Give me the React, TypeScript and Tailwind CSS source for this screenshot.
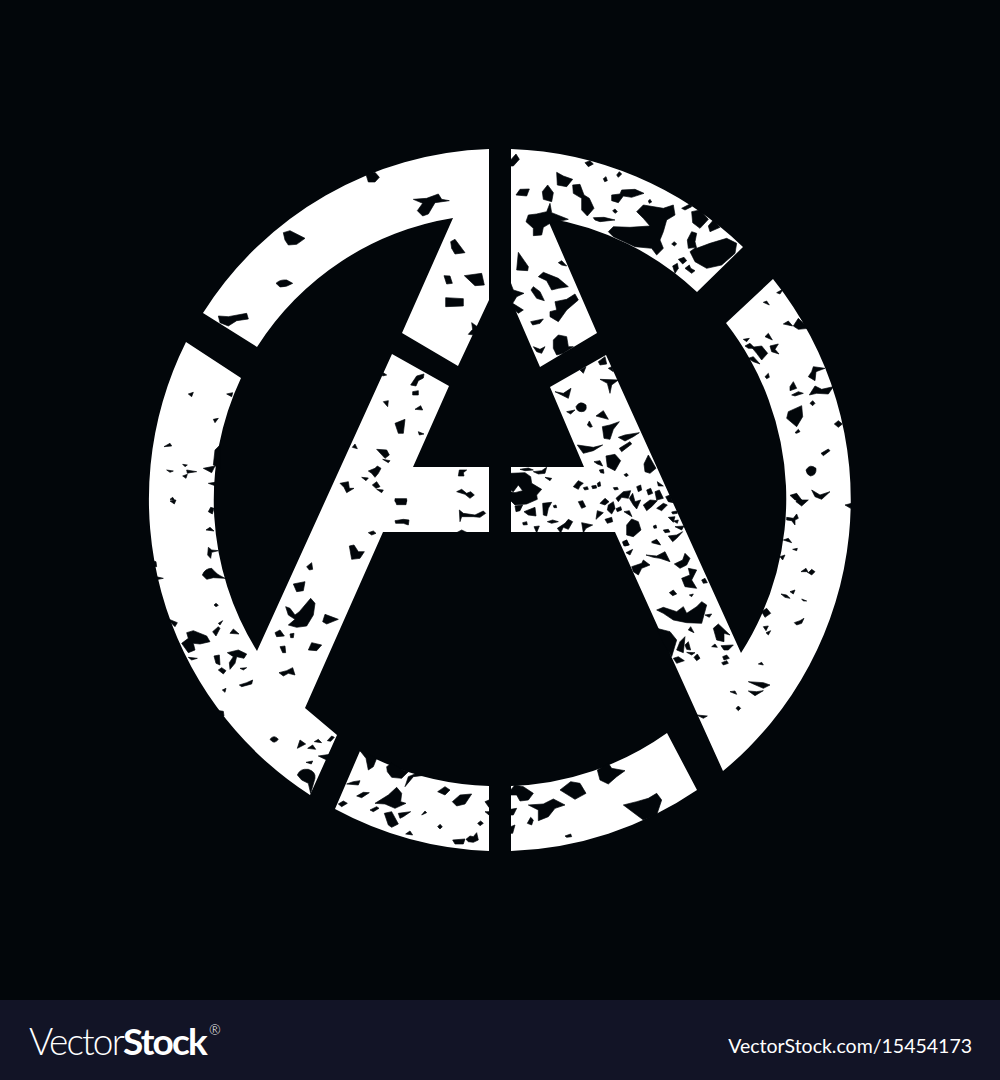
/* Distress marks are traced in 3x crop coordinates, one list per crop */
const INK = "#02060a";

const ringAndLetter = [
  "M489 149A352 352 0 0 0 203 313L257 347A286 286 0 0 1 453 218L402 333L458 366L489 300Z",
  "M186 342L241 378A286 286 0 0 0 257 651L392 354L449 386L413 467H489V532H383L305 708L337 735L310 795A352 352 0 0 1 186 342Z",
  "M360 751L335 809A352 352 0 0 0 489 851V786A286 286 0 0 1 360 751Z",
  "M511 851A352 352 0 0 0 697 790L667 733A286 286 0 0 1 511 786Z",
  "M723 771A352 352 0 0 0 773 279L726 323A286 286 0 0 1 741 653L606 355L550 387L584 467H511V532H615Z",
  "M511 149A352 352 0 0 1 743 247L697 292A286 286 0 0 0 547 218L597 333L540 367L511 300Z",
];

const topLeft = [
  "M678 103L705 97L718 112L705 126L685 126Z",
  "M820 178L860 175L895 162L905 178L928 182L885 188L865 222L848 228L832 212L848 190Z",
  "M430 278L450 272L495 295L470 313L445 315L435 300Z",
  "M408 430Q420 418 440 420L458 430Q440 442 420 441Z",
  "M235 528L265 530L320 520L325 537L290 542L265 558L240 548Z",
  "M932 305L945 298L975 338L945 342L935 325Z",
  "M912 407L930 408L937 430L920 432Z",
  "M973 407L1025 400L1033 435L1005 437Z",
  "M917 473L970 476L970 498L917 500Z",
  "M995 548L1012 560L1003 585L985 583L998 568Z",
  "M812 735L830 708L852 702L850 714L835 722L828 738Z",
  "M818 755L835 752L835 765L818 765Z",
  "M825 808L842 797L848 810Z",
  "M765 850L795 838L790 880L775 880Z",
  "M835 875L852 882L838 885Z",
  "M730 785L745 782L743 800Z",
  "M725 695L740 705L728 708Z",
  "M710 928L740 930L748 945L735 955Z",
  "M728 958L750 962L745 968Z",
  "M685 993L705 985L712 978L723 985L715 1000L705 1012L695 1000Z",
  "M665 1012L685 1014L678 1022Z",
  "M697 1035L710 1025L720 1040L708 1045Z",
  "M710 1048L730 1050L725 1058Z",
  "M600 1030L625 1025L628 1045L642 1045L620 1058L612 1042Z",
  "M637 922L645 912L652 926Z",
  "M958 990L980 990L970 998L972 1008L955 1008Z",
  "M950 1055L965 1048L980 1060L992 1055L1003 1065L990 1075L975 1063Z",
  "M765 1076L800 1076L800 1085L765 1085Z",
  "M145 762L160 757L155 770Z",
  "M260 762L278 758L275 770Z",
  "M220 838L235 835L225 848Z",
  "M72 920L90 910L95 918Z",
  "M80 990L100 993L90 997Z",
  "M128 973L142 975L135 980Z",
  "M140 990L170 995L150 998L142 1000Z",
  "M128 1008L142 1003L138 1015Z",
  "M190 985L225 978L215 998Z",
  "M205 1030L225 1027L225 1037Z",
  "M225 930L240 915L240 985L220 975Z",
  "M90 1078L98 1072L105 1082Z",
];

const bottomLeft = [
  "M90 3L108 0L103 12Z",
  "M205 35L212 22L222 25L217 42Z",
  "M198 90L210 82L222 93Z",
  "M205 142L215 150L235 152L215 157L212 175L203 165Z",
  "M187 225Q195 205 215 205Q230 225 255 235L220 233L200 238Z",
  "M30 180L48 185L50 200L35 198Z",
  "M40 228L70 235L45 240Z",
  "M222 315L228 310L235 316L228 320Z",
  "M80 355L112 368L105 380Z",
  "M125 430L145 415L140 398L160 392L200 408L210 425L180 432L160 430L165 450L145 458Z",
  "M145 472L172 475L155 480Z",
  "M218 395L235 380L240 385L228 408Z",
  "M235 370L248 362L240 375Z",
  "M270 400L280 387L297 402Z",
  "M262 458L295 450L320 462L312 475L290 470L285 490L270 508L268 488L280 470Z",
  "M222 468L238 465L240 495L228 490Z",
  "M235 510L245 503L258 512L250 522Z",
  "M300 505L320 503L310 510Z",
  "M298 555L320 548L338 540L335 552L305 560Z",
  "M247 570L258 565L255 577Z",
  "M500 200L515 188L518 208L508 210Z",
  "M460 252L495 245L490 272L470 275Z",
  "M478 335L512 295L525 310L520 345L500 378L470 382L445 375L465 358L445 345L437 320L450 325L465 345Z",
  "M555 343L595 358L560 372L548 365Z",
  "M405 398L420 390L433 408L410 410Z",
  "M450 402L462 400L460 413L452 413Z",
  "M420 440L435 438L437 458L428 458Z",
  "M505 450L515 428L545 435L530 452Z",
  "M417 518L440 512L458 503L465 525L445 520L430 528Z",
  "M628 138L642 135L655 155L673 155L660 175L635 178Z",
  "M685 98L700 93L708 100L695 105Z",
  "M765 0L800 0L798 14L770 14Z",
  "M765 62L790 58L807 60L805 75L790 70L767 70Z",
  "M958 30L970 40L1005 45L1030 33L1037 40L1020 52L1000 50L965 50L960 65Z",
  "M950 98L965 90L982 98Z",
  "M390 718Q402 702 415 718Q402 735 390 718Z",
  "M472 745L480 720L497 732Z",
  "M503 745L518 735L527 748Z",
  "M523 725L535 718L545 728Z",
  "M562 722L575 708L583 712L572 724Z",
  "M535 768L570 763L560 780Z",
  "M498 787L518 783L514 792Z",
  "M472 825Q480 805 505 808Q528 815 525 835L512 880L505 850L485 840Z",
  "M238 632L250 634L252 648L242 645Z",
  "M660 752L680 760L710 775L700 800L685 810L678 775Z",
  "M740 800L755 790L790 810L805 815L785 835L755 832L742 815Z",
  "M795 860L805 830L830 820L860 825L820 830Z",
  "M893 875L915 860L930 870L915 885Z",
  "M937 905L960 885L995 882L975 912L950 918Z",
  "M1035 905L1047 900L1047 922Z",
  "M1035 935L1047 935L1047 945Z",
  "M705 910L745 885L770 862L785 880L782 905L798 910L765 925L735 912Z",
  "M690 930L710 920L717 925L700 935Z",
  "M650 888L670 877L688 878L665 893Z",
  "M620 852L640 845L660 842L655 855Z",
  "M595 912L610 903L622 910L605 920Z",
  "M733 940L755 935L775 972L755 982L745 975Z",
  "M775 940L812 935L790 950L780 955Z",
  "M845 945L855 933L860 938Z",
  "M893 980L900 973L907 980L900 987Z",
  "M1013 970L1022 963L1030 970L1020 977Z",
  "M797 1002L810 993L818 1005Z",
  "M938 1020L975 1017L970 1032L945 1032Z",
  "M978 1018L990 1008L1000 1010L1010 998L1015 1020L1000 1027L985 1025Z",
];

const topRight = [
  "M32 60L48 42L58 58L40 78L32 78Z",
  "M255 68L270 62L280 72L265 80Z",
  "M170 97L190 108L218 118L200 140L172 135Z",
  "M48 165L60 148L88 147L80 168Z",
  "M143 135L160 158L155 185L130 178L127 155Z",
  "M350 105L358 95L365 102L355 112Z",
  "M310 116L318 110L322 122L314 125Z",
  "M218 135L240 133L252 165L268 175L282 205L262 228L245 210L245 175L220 160Z",
  "M365 150L405 148L432 160L395 172L370 168L355 188L335 182L335 165L360 162Z",
  "M445 183L450 178L455 186L448 190Z",
  "M338 212L345 207L352 215L345 220Z",
  "M280 233L312 232L345 240L300 245L285 240Z",
  "M150 190L155 218L205 238L150 250L130 262L125 285L100 287L100 265L78 245L85 225L110 222L140 215Z",
  "M410 215L430 195L490 205L520 195L525 225L500 240L490 275L480 300L490 325L470 345L455 325L405 320L340 290L325 275L340 260L390 262L450 258L430 235Z",
  "M562 300L575 275L590 280L585 305L590 325L630 310L680 295L710 310L705 340L665 375L620 385L585 365L570 335L588 322L565 325Z",
  "M575 215L600 210L625 238L600 265L578 248Z",
  "M545 205L570 192L575 200L555 210Z",
  "M640 240L660 262L630 275L625 258Z",
  "M515 312L523 305L530 312L523 318Z",
  "M535 358L552 352L560 362L548 372Z",
  "M518 378L532 370L535 385L525 400Z",
  "M555 385L568 375L572 385L585 392L575 400Z",
  "M55 337L85 380L83 392L50 390Z",
  "M175 368L185 362L200 378L185 375Z",
  "M115 410L130 397L175 415L205 440L175 445L155 450L140 422Z",
  "M100 440L120 455L133 482L110 475L93 450Z",
  "M32 430L40 450L72 460L50 470L38 490L70 510L55 520L32 500Z",
  "M165 485L200 478L225 462L235 480L200 510L175 545L150 530L150 515L170 510Z",
  "M92 545L130 537L120 550L98 555Z",
  "M160 600L175 585L200 590L205 620L220 620L190 640L170 645L160 625Z",
  "M100 620L120 628L135 620L125 640L110 635Z",
  "M295 665L315 650L320 672L300 675Z",
  "M240 690L258 680L250 700Z",
  "M325 685L335 680L340 695Z",
  "M300 718L355 720L335 735L330 760L322 730Z",
  "M165 755L190 760L213 745L205 775L185 765Z",
  "M228 800Q240 780 258 795Q262 815 245 815Q230 815 228 800Z",
  "M200 815L225 810L212 822Z",
  "M288 828L310 812L325 838Z",
  "M262 855L268 843L277 860L270 862Z",
  "M307 860L330 855L358 845L340 868L330 898L312 895Z",
  "M355 892L375 885L418 878L400 890L375 903Z",
  "M358 925L390 905L395 912L365 935Z",
  "M232 915L280 922L308 915L280 932L250 940Z",
  "M830 458L850 447L840 462Z",
  "M790 487L800 483L808 495Z",
  "M850 552L865 543L878 558Z",
  "M880 558L895 535L925 565L895 568Z",
  "M795 590L805 580L817 600Z",
  "M730 598L748 595L740 605Z",
  "M735 618L750 610L765 625L745 625Z",
  "M755 622L785 618L803 640L785 660L770 640Z",
  "M745 655L760 650L780 672L760 665Z",
  "M810 618L835 612L825 628L837 642L815 635Z",
  "M795 710L805 700L808 712L800 716Z",
  "M940 680L975 685L948 695L945 722L925 710L935 695Z",
  "M928 765L945 738L965 748L1000 740L985 762L950 760Z",
  "M870 740L880 725L890 745L870 752Z",
  "M875 765L895 755L910 760L885 768Z",
  "M930 790L938 782L945 790L938 797Z",
  "M865 815L905 797L908 830L890 860L860 835Z",
  "M885 878L895 868L900 875L890 880Z",
  "M1003 852L1015 842L1027 852L1015 862Z",
  "M963 940L985 927L990 932L970 947Z",
  "M918 990Q930 970 948 985Q950 1005 932 1008Q920 1005 918 990Z",
  "M870 1066L890 1060L905 1080L885 1080Z",
  "M935 1050L960 1065L990 1055L965 1078L945 1070Z",
];

/* crop at (500,440), the crossbar and the dense part of the right leg */
const crossbar = [
  "M318 48L345 43L362 62L345 92L322 80Z",
  "M282 65L300 62L308 78L292 72Z",
  "M298 90L310 88L312 100L302 98Z",
  "M372 104L380 100L385 106L378 110Z",
  "M432 72L445 45L468 85L450 100L435 95Z",
  "M472 125L490 138L475 138Z",
  "M32 100L75 98L92 110L95 130L125 148L110 165L112 178L80 192L45 195L32 182L32 155L45 158L68 152L55 135L40 155L32 150Z",
  "M100 95L125 92L140 82L135 100L115 102Z",
  "M60 88L85 84L100 90L75 92Z",
  "M135 112L155 115L150 122Z",
  "M220 140L235 122L250 130L240 138L235 148Z",
  "M250 143L262 140L265 148L254 150Z",
  "M275 138L288 136L290 144L278 146Z",
  "M292 130L300 125L302 138L294 140Z",
  "M235 185L248 182L257 200L245 205Z",
  "M300 190L315 175L327 185L315 195Z",
  "M340 143L352 142L355 148L344 150Z",
  "M348 175L370 155L392 152L385 175L365 172L355 185Z",
  "M388 175L398 160L405 185L422 180L410 207L400 195Z",
  "M325 195L340 185L345 205L335 222L322 210Z",
  "M410 140L422 135L425 150L415 155Z",
  "M440 150L452 145L458 160L445 165Z",
  "M430 195L450 180L472 182L455 200L440 212Z",
  "M465 155L478 150L490 175L470 180Z",
  "M470 205L490 190L502 195L485 212Z",
  "M497 170L510 165L520 188L505 185Z",
  "M515 216L530 213L532 220L518 222Z",
  "M505 232L525 230L520 247Z",
  "M520 243L535 240L532 250Z",
  "M525 260L552 258L545 270Z",
  "M490 270L505 268L510 276L495 278Z",
  "M505 288L530 285L548 275L530 295L518 305Z",
  "M460 258L468 255L470 264L462 265Z",
  "M455 305L470 298L480 312Z",
  "M348 206L362 200L365 210L352 215Z",
  "M372 215L388 212L396 230Z",
  "M288 238L292 212L310 218Z",
  "M315 238L335 232L338 245L322 250Z",
  "M380 255L395 237L415 245L423 270L400 290L380 285Z",
  "M72 215L105 202L108 228L85 225Z",
  "M128 190L155 187L145 205L140 228L130 225Z",
  "M160 197L168 195L170 203L162 203Z",
  "M45 198L68 195L60 212L48 215Z",
  "M68 248L80 245L82 254L70 255Z",
  "M142 245L158 240L175 245L155 250Z",
  "M172 265L195 250L205 238L218 245L205 268L190 262L182 278Z",
  "M245 248L278 255L258 265L250 278Z",
  "M102 260L118 258L110 278Z",
  "M368 305L380 300L385 315L372 318Z",
];

const bottomRight = [
  "M455 128L470 120L482 135Z",
  "M368 128L380 120L388 135L375 138Z",
  "M378 158L398 148L390 165Z",
  "M438 165L470 168L495 155L510 185L480 175L460 172Z",
  "M395 200L425 190L430 180L450 195L425 205L415 225L400 215Z",
  "M523 192L548 180L555 160L570 175L560 195L540 205Z",
  "M545 235L570 225L565 205L590 210L575 240L590 265L555 260Z",
  "M605 240L615 235L622 248L610 250Z",
  "M508 278L520 270L530 282L518 287Z",
  "M568 285L580 282L575 290Z",
  "M470 330L490 322L530 335L550 320L560 340L590 320L605 305L620 315L605 370L560 368L520 360L490 340Z",
  "M615 345L635 342L628 352Z",
  "M640 385L655 372L690 405L672 400L672 425L650 420Z",
  "M565 390L572 380L582 398Z",
  "M635 440L645 432L652 442Z",
  "M663 437L700 435L685 450L672 450Z",
  "M530 450L540 425L555 410L550 458Z",
  "M555 435L565 425L572 450L560 448Z",
  "M560 457L585 458L575 465Z",
  "M582 472L592 462L600 475L590 482Z",
  "M520 475L535 470L553 482L530 490Z",
  "M668 470L680 465L688 475L672 480Z",
  "M665 488L680 482L685 490L670 495Z",
  "M775 492L785 487L790 495Z",
  "M745 545L790 548L810 555L790 565L760 552Z",
  "M745 573L770 575L790 572L765 587Z",
  "M690 575L705 573L710 583Z",
  "M708 625L715 618L722 625L715 632Z",
  "M590 645L622 648L610 655Z",
  "M470 385L510 395L530 420L515 470L490 430Z",
  "M888 5L890 0L925 0L905 18Z",
  "M860 52L880 55L890 42L895 55L885 60L885 75L875 62L860 60Z",
  "M850 120L865 115L875 128Z",
  "M878 148L892 145L890 152Z",
  "M903 215L918 205L925 218L935 208L945 215L935 225L920 215Z",
  "M843 282L860 285L870 295L855 292Z",
  "M870 275L885 270L880 282Z",
  "M905 297L920 303L910 303Z",
  "M883 368L900 362L912 355L905 370L890 375Z",
  "M1035 15L1055 10L1052 25Z",
  "M785 335L800 325L812 340L795 352Z",
  "M790 380L805 378L798 392Z",
  "M798 398L812 392L805 405Z",
  "M840 170L855 165L848 180Z",
  "M32 870L45 855L70 860L100 880L85 900L60 903L50 885L32 885Z",
  "M180 870L212 845L240 850L258 880L225 898Z",
  "M292 810L325 790L335 805L375 812L350 830L325 852L300 840Z",
  "M85 915L130 912L160 897L195 915L165 925L145 950L115 962L115 930Z",
  "M82 970L92 952L100 960L95 975Z",
  "M32 928L50 925L40 945L32 945Z",
  "M32 980L45 975L38 1000L32 1000Z",
  "M195 1008L212 1002L215 1010L200 1012Z",
  "M370 915L410 905L445 895L470 880L485 900L470 945L430 960Z",
];

const Marks = ({ x, y, paths }: { x: number; y: number; paths: string[] }) => (
  <g
    transform={`translate(${x} ${y}) scale(0.33333)`}
    fill={INK}
    stroke={INK}
    strokeWidth={2}
    strokeLinejoin="round"
  >
    {paths.map((d) => (
      <path key={d} d={d} />
    ))}
  </g>
);

export default function App() {
  return (
    <div className="w-[1000px] h-[1080px] flex flex-col bg-[#02060a] overflow-hidden">
      <div className="h-[1000px]">
        <svg viewBox="0 0 1000 1000" className="block w-full h-full">
          <path d={ringAndLetter.join("")} fill="#ffffff" />
          <Marks x={140} y={140} paths={topLeft} />
          <Marks x={500} y={140} paths={topRight} />
          <Marks x={140} y={500} paths={bottomLeft} />
          <Marks x={500} y={500} paths={bottomRight} />
          <Marks x={500} y={440} paths={crossbar} />
        </svg>
      </div>

      <div className="h-20 bg-[#121426] flex items-center justify-between pl-[29px] pr-[28px] text-white font-['Lato',sans-serif]">
        <div className="flex items-start text-[37px] leading-none mt-[1px]">
          <span className="font-light tracking-[-1.8px]">Vector</span>
          <span className="font-bold tracking-[-1.8px]">Stock</span>
          <span className="text-[14px] font-light mt-[1px] ml-[3px] tracking-normal">®</span>
        </div>
        <div className="text-[19.5px] leading-none font-normal mt-[12px]">VectorStock.com/15454173</div>
      </div>
    </div>
  );
}
